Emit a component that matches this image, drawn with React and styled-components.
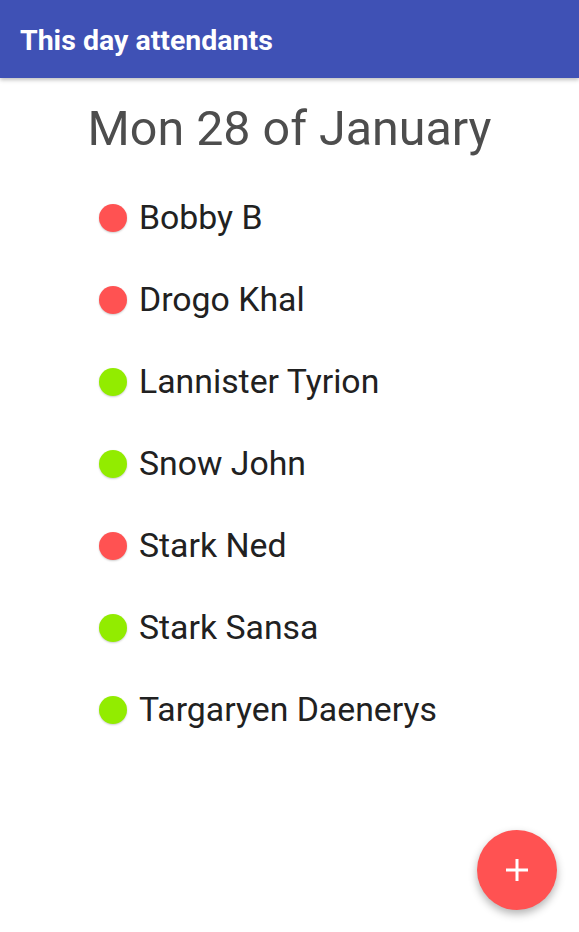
import React from "react";
import styled, { createGlobalStyle } from "styled-components";

const Global = createGlobalStyle`
  html, body { margin: 0; padding: 0; background: #fff; }
  body { font-family: Roboto, "Noto Sans", sans-serif; }
`;

const Page = styled.div`
  width: 579px;
  height: 932px;
  position: relative;
  overflow: hidden;
  background: #fff;
`;

const AppBar = styled.header`
  height: 78px;
  background: #3f51b5;
  display: flex;
  align-items: center;
  padding: 0 20px;
  box-shadow: 0 2px 4px rgba(0, 0, 0, 0.25);
  position: relative;
  z-index: 1;
`;

const Title = styled.h1`
  margin: 0;
  padding-top: 2px;
  color: #fff;
  font-size: 28.5px;
  font-weight: 700;
  font-family: Roboto, sans-serif;
`;

const DateTitle = styled.h2`
  margin: 0;
  padding-top: 21px;
  text-align: center;
  font-size: 48.4px;
  font-weight: 400;
  color: #4d4d4d;
  line-height: 60px;
`;

const List = styled.ul`
  list-style: none;
  margin: 0;
  padding: 18px 0 0 99px;
`;

const Row = styled.li`
  height: 82px;
  display: flex;
  align-items: center;
  gap: 12px;
`;

const Dot = styled.span`
  width: 28px;
  height: 28px;
  border-radius: 50%;
  background: ${(p) => (p.$present ? "#92ec00" : "#ff5252")};
  box-shadow: 0 1px 2px rgba(0, 0, 0, 0.2);
  flex: none;
`;

const Name = styled.span`
  font-size: 33.8px;
  color: #212121;
  padding-bottom: 2px;
`;

const Fab = styled.button`
  position: absolute;
  left: 477px;
  top: 830px;
  width: 80px;
  height: 80px;
  border-radius: 50%;
  border: none;
  background: #ff5252;
  box-shadow: 0 4px 8px rgba(0, 0, 0, 0.3);
  display: flex;
  align-items: center;
  justify-content: center;
  padding: 0;
`;

const people = [
  ["Bobby B", false],
  ["Drogo Khal", false],
  ["Lannister Tyrion", true],
  ["Snow John", true],
  ["Stark Ned", false],
  ["Stark Sansa", true],
  ["Targaryen Daenerys", true],
];

export default function App() {
  return (
    <Page>
      <Global />
      <AppBar>
        <Title>This day attendants</Title>
      </AppBar>
      <DateTitle>Mon 28 of January</DateTitle>
      <List>
        {people.map(([name, present]) => (
          <Row key={name}>
            <Dot $present={present} />
            <Name>{name}</Name>
          </Row>
        ))}
      </List>
      <Fab aria-label="add">
        <svg width="22" height="22" viewBox="0 0 22 22">
          <rect x="9.5" y="0" width="3" height="22" fill="#fff" />
          <rect x="0" y="9.5" width="22" height="3" fill="#fff" />
        </svg>
      </Fab>
    </Page>
  );
}
